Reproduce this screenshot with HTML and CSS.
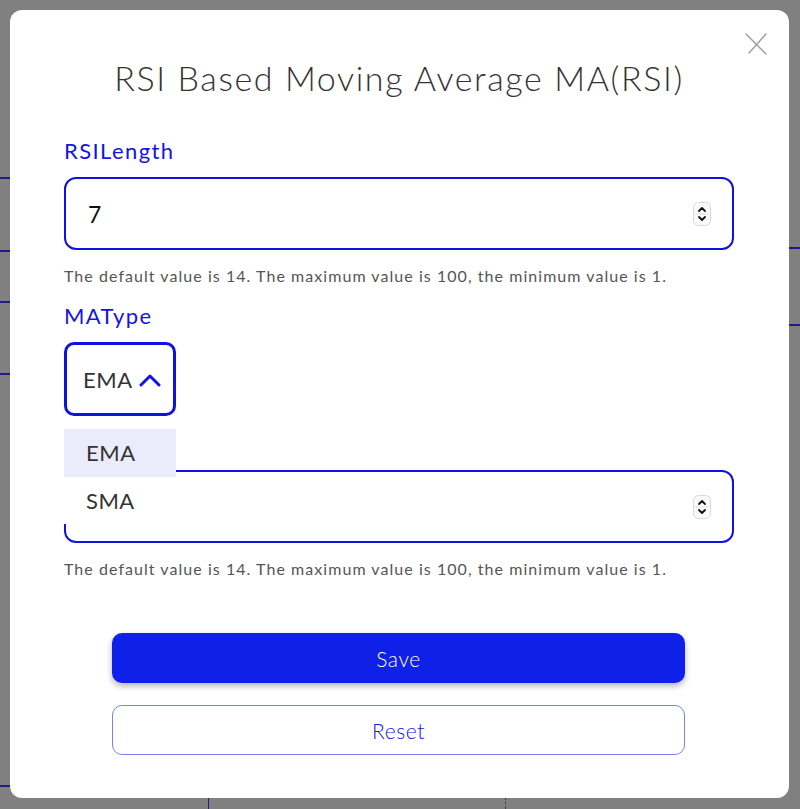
FILE: index.html
```html
<!DOCTYPE html>
<html lang="en">
<head>
<meta charset="utf-8">
<title>MA(RSI)</title>
<link rel="stylesheet" href="styles.css">
</head>
<body>
<div class="backdrop">
  <div class="bg-line l1"></div>
  <div class="bg-line l2"></div>
  <div class="bg-line l3"></div>
  <div class="bg-line l4"></div>
  <div class="bg-line r1"></div>
  <div class="bg-line r2"></div>
  <div class="bg-line b1"></div>
  <div class="bg-vline v1"></div>
  <div class="bg-dash d1"></div>
</div>

<div class="modal">
  <button class="close" aria-label="Close">
    <svg width="24" height="24" viewBox="0 0 24 24"><path d="M2 2 L22 22 M22 2 L5 21" stroke="#a0a0a0" stroke-width="1.5" fill="none" stroke-linecap="round"/></svg>
  </button>
  <h1 class="title">RSI Based Moving Average MA(RSI)</h1>

  <div class="field">
    <label class="label">RSILength</label>
    <div class="input">
      <span class="value">7</span>
      <span class="spin">
        <svg width="18" height="24" viewBox="0 0 18 24"><rect x="0.5" y="0.5" width="17" height="23" rx="5" fill="#fafafa" stroke="#d8d8d8"/><line x1="2" y1="12" x2="16" y2="12" stroke="#e2e2e2"/><path d="M6 9 L9 6 L12 9" stroke="#111" stroke-width="1.8" fill="none" stroke-linecap="round" stroke-linejoin="round"/><path d="M6 15 L9 18 L12 15" stroke="#111" stroke-width="1.8" fill="none" stroke-linecap="round" stroke-linejoin="round"/></svg>
      </span>
    </div>
    <p class="help">The default value is 14. The maximum value is 100, the minimum value is 1.</p>
  </div>

  <div class="field">
    <label class="label">MAType</label>
    <div class="select-wrap">
      <div class="select">
        <span>EMA</span>
        <svg width="22" height="13" viewBox="0 0 22 13"><path d="M2 11 L11 2 L20 11" stroke="#1414e6" stroke-width="3" fill="none" stroke-linecap="round" stroke-linejoin="round"/></svg>
      </div>
      <ul class="menu">
        <li class="opt active">EMA</li>
        <li class="opt">SMA</li>
      </ul>
    </div>
  </div>

  <div class="field">
    <label class="label hidden-label">MALength</label>
    <div class="input">
      <span class="value"></span>
      <span class="spin">
        <svg width="18" height="24" viewBox="0 0 18 24"><rect x="0.5" y="0.5" width="17" height="23" rx="5" fill="#fafafa" stroke="#d8d8d8"/><line x1="2" y1="12" x2="16" y2="12" stroke="#e2e2e2"/><path d="M6 9 L9 6 L12 9" stroke="#111" stroke-width="1.8" fill="none" stroke-linecap="round" stroke-linejoin="round"/><path d="M6 15 L9 18 L12 15" stroke="#111" stroke-width="1.8" fill="none" stroke-linecap="round" stroke-linejoin="round"/></svg>
      </span>
    </div>
    <p class="help">The default value is 14. The maximum value is 100, the minimum value is 1.</p>
  </div>

  <div class="actions">
    <button class="btn save">Save</button>
    <button class="btn reset">Reset</button>
  </div>
</div>
</body>
</html>
```

FILE: styles.css
```css
* { box-sizing: border-box; }
html, body { margin: 0; padding: 0; }
body {
  width: 800px;
  height: 809px;
  background: #808080;
  font-family: "Lato", "Open Sans", sans-serif;
  overflow: hidden;
}
.backdrop { position: absolute; inset: 0; }
.bg-line { position: absolute; height: 2px; background: #1c1c8c; }
.l1 { left: 0; top: 177px; width: 10px; }
.l2 { left: 0; top: 250px; width: 10px; }
.l3 { left: 0; top: 301px; width: 10px; }
.l4 { left: 0; top: 373px; width: 10px; }
.r1 { left: 789px; top: 247px; width: 11px; }
.r2 { left: 789px; top: 324px; width: 11px; }
.b1 { left: 0; top: 785px; width: 10px; }
.bg-vline { position: absolute; width: 1px; background: #1c1c8c; }
.v1 { left: 208px; top: 797px; height: 12px; }
.bg-dash { position: absolute; border-left: 1px dashed #444; }
.d1 { left: 505px; top: 797px; height: 12px; }

.modal {
  position: fixed;
  left: 10px;
  top: 10px;
  width: 779px;
  height: 788px;
  background: #fff;
  border-radius: 12px;
  padding: 46px 55px 0 54px;
  display: flex;
  flex-direction: column;
}
.close {
  position: absolute;
  right: 21px;
  top: 22px;
  background: none;
  border: 0;
  padding: 0;
  width: 24px;
  height: 24px;
}
.title {
  margin: 0 0 37px;
  text-align: center;
  font-weight: 300;
  font-size: 34px;
  line-height: 44px;
  color: #333;
  letter-spacing: 1.6px;
}
.field { display: flex; flex-direction: column; }
.label {
  font-size: 22px;
  line-height: 28px;
  color: #1414e6;
  margin-bottom: 12px;
  letter-spacing: 1.4px;
}
.input {
  height: 73px;
  border: 2px solid #1212e0;
  border-radius: 12px;
  display: flex;
  align-items: center;
  justify-content: space-between;
  padding: 0 21px 0 22px;
}
.value { font-size: 23px; color: #111; }
.spin { display: flex; }
.help {
  margin: 16px 0 16px;
  font-size: 16px;
  line-height: 20px;
  color: #555;
  letter-spacing: 1.05px;
}
.select-wrap { position: relative; margin-bottom: 14px; }
.select {
  width: 112px;
  height: 74px;
  border: 3px solid #1212e0;
  border-radius: 10px;
  display: flex;
  align-items: center;
  gap: 6px;
  padding-left: 16px;
  font-size: 22px;
  color: #333;
  letter-spacing: 0.5px;
}
.select svg { margin-top: 2px; }
.menu {
  position: absolute;
  left: 0;
  top: 87px;
  width: 112px;
  margin: 0;
  padding: 0;
  list-style: none;
  background: #fff;
  z-index: 2;
}
.opt {
  height: 47.5px;
  display: flex;
  align-items: center;
  padding-left: 22px;
  font-size: 22px;
  color: #333;
  letter-spacing: 0.5px;
}
.opt.active { background: #ebebfb; }
.actions {
  display: flex;
  flex-direction: column;
  align-items: center;
  gap: 22px;
  margin-top: 38px;
  margin-left: -1px;
}
.btn {
  width: 573px;
  height: 50px;
  border-radius: 10px;
  font-family: inherit;
  font-size: 21px;
  font-weight: 300;
  letter-spacing: 0.6px;
}
.save {
  background: #0f20e8;
  color: #fff;
  border: 0;
  box-shadow: 0 3px 6px rgba(0,0,0,0.3);
}
.reset {
  background: #fff;
  color: #1414e6;
  border: 1.5px solid #7a80f2;
}
```
